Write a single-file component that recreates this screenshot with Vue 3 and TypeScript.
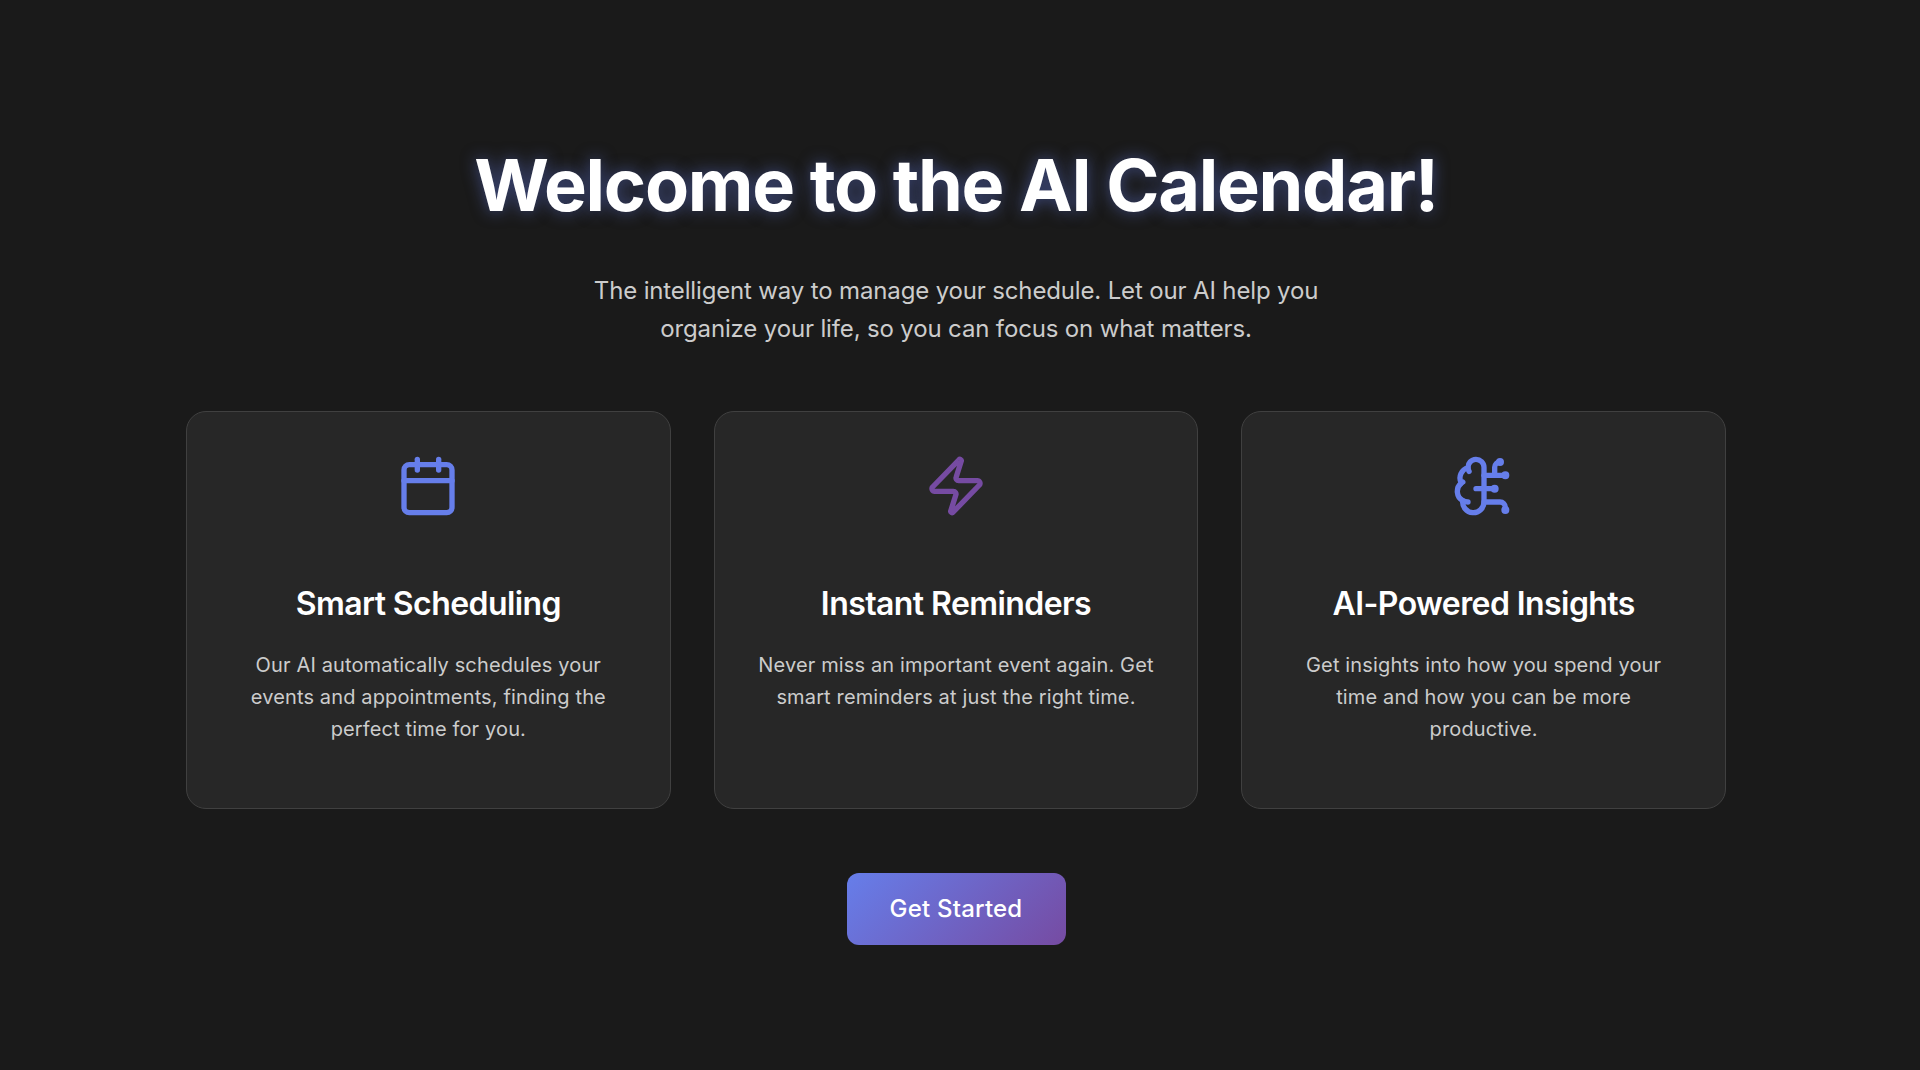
<script setup lang="ts">
interface Feature {
  title: string;
  text: string;
  tone: string;
  kind: "calendar" | "zap" | "brain";
}

const features: Feature[] = [
  {
    title: "Smart Scheduling",
    text: "Our AI automatically schedules your events and appointments, finding the perfect time for you.",
    tone: "blue",
    kind: "calendar",
  },
  {
    title: "Instant Reminders",
    text: "Never miss an important event again. Get smart reminders at just the right time.",
    tone: "purple",
    kind: "zap",
  },
  {
    title: "AI-Powered Insights",
    text: "Get insights into how you spend your time and how you can be more productive.",
    tone: "blue",
    kind: "brain",
  },
];
</script>

<template>
  <main class="welcome">
    <h1 class="title">Welcome to the AI Calendar!</h1>
    <p class="subtitle">
      The intelligent way to manage your schedule. Let our AI help you organize
      your life, so you can focus on what matters.
    </p>
    <section class="features">
      <article v-for="f in features" :key="f.title" class="card">
        <svg
          class="icon"
          :class="f.tone"
          viewBox="0 0 24 24"
          fill="none"
          stroke="currentColor"
          stroke-width="2"
          stroke-linecap="round"
          stroke-linejoin="round"
        >
          <template v-if="f.kind === 'calendar'">
            <path d="M8 2v4" />
            <path d="M16 2v4" />
            <rect x="3" y="4" width="18" height="18" rx="2" />
            <path d="M3 10h18" />
          </template>
          <path
            v-else-if="f.kind === 'zap'"
            d="M4 14a1 1 0 0 1-.78-1.63l9.9-10.2a.5.5 0 0 1 .86.46l-1.92 6.02A1 1 0 0 0 13 10h7a1 1 0 0 1 .78 1.63l-9.9 10.2a.5.5 0 0 1-.86-.46l1.92-6.02A1 1 0 0 0 11 14z"
          />
          <template v-else>
            <path d="M12 5a3 3 0 1 0-5.997.142 4 4 0 0 0-2.526 5.77 4 4 0 0 0 .556 6.588A4 4 0 1 0 12 18Z" />
            <path d="M9 13h3" />
            <path d="M6.003 5.142a3 3 0 0 0 .398 1.358" />
            <path d="M3.477 10.912a4 4 0 0 1 .585-.396" />
            <path d="M6 18a4 4 0 0 1-1.967-.516" />
            <path d="M12 13h4" />
            <path d="M12 18h6a2 2 0 0 1 2 2v1" />
            <path d="M12 8h8" />
            <path d="M16 8V5a2 2 0 0 1 2-2" />
            <circle cx="16" cy="13" r=".5" />
            <circle cx="18" cy="3" r=".5" />
            <circle cx="20" cy="21" r=".5" />
            <circle cx="20" cy="8" r=".5" />
          </template>
        </svg>
        <h3 class="card-title">{{ f.title }}</h3>
        <p class="card-text">{{ f.text }}</p>
      </article>
    </section>
    <button class="cta" type="button">Get Started</button>
  </main>
</template>

<style>
html,
body {
  margin: 0;
  background: #1a1a1a;
}
</style>

<style scoped>
.welcome {
  box-sizing: border-box;
  height: 1070px;
  padding: 141px 8px 0 0;
  display: flex;
  flex-direction: column;
  align-items: center;
  background: #1a1a1a;
  color: #fff;
  font-family: Inter, "Liberation Sans", sans-serif;
}

.title {
  margin: 0 0 43px;
  font-size: 72px;
  line-height: 88px;
  font-weight: 700;
  letter-spacing: -1.27px;
  color: #fff;
  text-shadow: 0 0 16px rgba(102, 126, 234, 0.5);
}

.subtitle {
  margin: 0 0 62px;
  width: 800px;
  font-size: 24px;
  line-height: 38.4px;
  letter-spacing: -0.15px;
  text-align: center;
  color: #ccc;
}

.features {
  width: 1540px;
  display: grid;
  grid-template-columns: repeat(3, 1fr);
  gap: 43px;
  margin-bottom: 64px;
}

.card {
  box-sizing: border-box;
  height: 398px;
  padding: 42px 41px;
  background: #272727;
  border: 1px solid #404040;
  border-radius: 20px;
  text-align: center;
}

.icon {
  display: block;
  width: 64px;
  height: 64px;
  margin: 0 auto 66px;
}

.icon.blue {
  color: #667eea;
}

.icon.purple {
  color: #764ba2;
}

.card-title {
  margin: 0 0 25px;
  font-size: 32px;
  line-height: 40px;
  font-weight: 600;
  letter-spacing: -0.58px;
  color: #fff;
}

.card-text {
  margin: 0;
  font-size: 20px;
  line-height: 32px;
  letter-spacing: 0.14px;
  color: #ccc;
}

.cta {
  width: 219px;
  height: 72px;
  border: none;
  border-radius: 12px;
  background: linear-gradient(135deg, #667eea, #764ba2);
  color: #fff;
  font-family: inherit;
  font-size: 24px;
  font-weight: 500;
  letter-spacing: 0.2px;
}
</style>
